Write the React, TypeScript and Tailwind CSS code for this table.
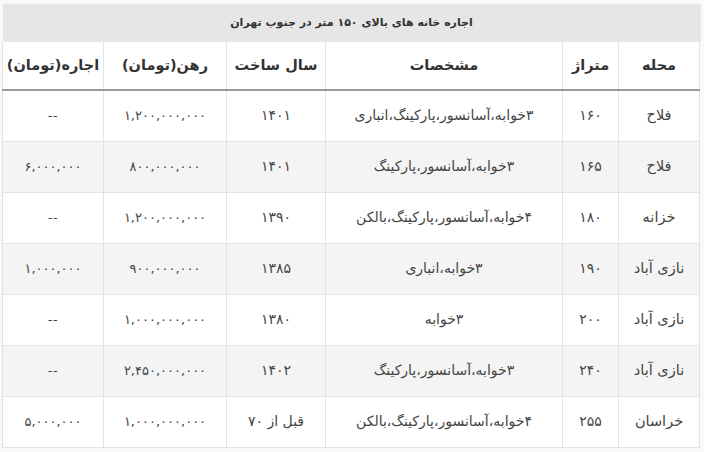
const rows = [
  { area: 'فلاح', size: '۱۶۰', spec: '۳خوابه،آسانسور،پارکینگ،انباری', year: '۱۴۰۱', rahn: '۱,۲۰۰,۰۰۰,۰۰۰', rent: '--' },
  { area: 'فلاح', size: '۱۶۵', spec: '۳خوابه،آسانسور،پارکینگ', year: '۱۴۰۱', rahn: '۸۰۰,۰۰۰,۰۰۰', rent: '۶,۰۰۰,۰۰۰' },
  { area: 'خزانه', size: '۱۸۰', spec: '۴خوابه،آسانسور،پارکینگ،بالکن', year: '۱۳۹۰', rahn: '۱,۲۰۰,۰۰۰,۰۰۰', rent: '--' },
  { area: 'نازی آباد', size: '۱۹۰', spec: '۳خوابه،انباری', year: '۱۳۸۵', rahn: '۹۰۰,۰۰۰,۰۰۰', rent: '۱,۰۰۰,۰۰۰' },
  { area: 'نازی آباد', size: '۲۰۰', spec: '۳خوابه', year: '۱۳۸۰', rahn: '۱,۰۰۰,۰۰۰,۰۰۰', rent: '--' },
  { area: 'نازی آباد', size: '۲۴۰', spec: '۳خوابه،آسانسور،پارکینگ', year: '۱۴۰۲', rahn: '۲,۴۵۰,۰۰۰,۰۰۰', rent: '--' },
  { area: 'خراسان', size: '۲۵۵', spec: '۴خوابه،آسانسور،پارکینگ،بالکن', year: 'قبل از ۷۰', rahn: '۱,۰۰۰,۰۰۰,۰۰۰', rent: '۵,۰۰۰,۰۰۰' },
];

const cell = 'border border-[#e2e2e2] text-center align-middle';

export default function App() {
  return (
    <div
      dir="rtl"
      className="w-[704px] h-[452px] bg-[#f9f9f9] pt-[4px] pl-[3px] pr-[4px] text-[#444] overflow-hidden"
      style={{ fontFamily: '"DejaVu Sans", "Noto Sans", sans-serif' }}
    >
      <div className="h-[38px] bg-[#e6e6e6] flex items-center justify-center text-[11px] font-bold text-[#333] shadow-[1px_0_1px_rgba(0,0,0,0.06)]">
        اجاره خانه های بالای ۱۵۰ متر در جنوب تهران
      </div>
      <table className="w-[697px] table-fixed border-collapse bg-white">
        <colgroup>
          <col className="w-[81px]" />
          <col className="w-[56px]" />
          <col className="w-[237px]" />
          <col className="w-[99px]" />
          <col className="w-[123px]" />
          <col className="w-[101px]" />
        </colgroup>
        <thead>
          <tr className="h-[48px]">
            {['محله', 'متراژ', 'مشخصات', 'سال ساخت', 'رهن(تومان)', 'اجاره(تومان)'].map((h) => (
              <th key={h} className="border-x border-[#e2e2e2] border-b-2 border-b-[#9a9a9a] text-center text-[14.5px] font-semibold text-[#333]">
                {h}
              </th>
            ))}
          </tr>
        </thead>
        <tbody>
          {rows.map((r, i) => (
            <tr key={i} className={`h-[51px] ${i % 2 === 1 ? 'bg-[#f4f4f4]' : 'bg-white'}`}>
              <td className={`${cell} text-[14.5px]`}>{r.area}</td>
              <td className={`${cell} text-[14px]`}>{r.size}</td>
              <td className={`${cell} text-[14px]`}>{r.spec}</td>
              <td className={`${cell} text-[14px]`}>{r.year}</td>
              <td className={`${cell} text-[13px] tracking-[0.5px]`}>{r.rahn}</td>
              <td className={`${cell} text-[13px] tracking-[0.5px]`}>{r.rent}</td>
            </tr>
          ))}
        </tbody>
      </table>
    </div>
  );
}
